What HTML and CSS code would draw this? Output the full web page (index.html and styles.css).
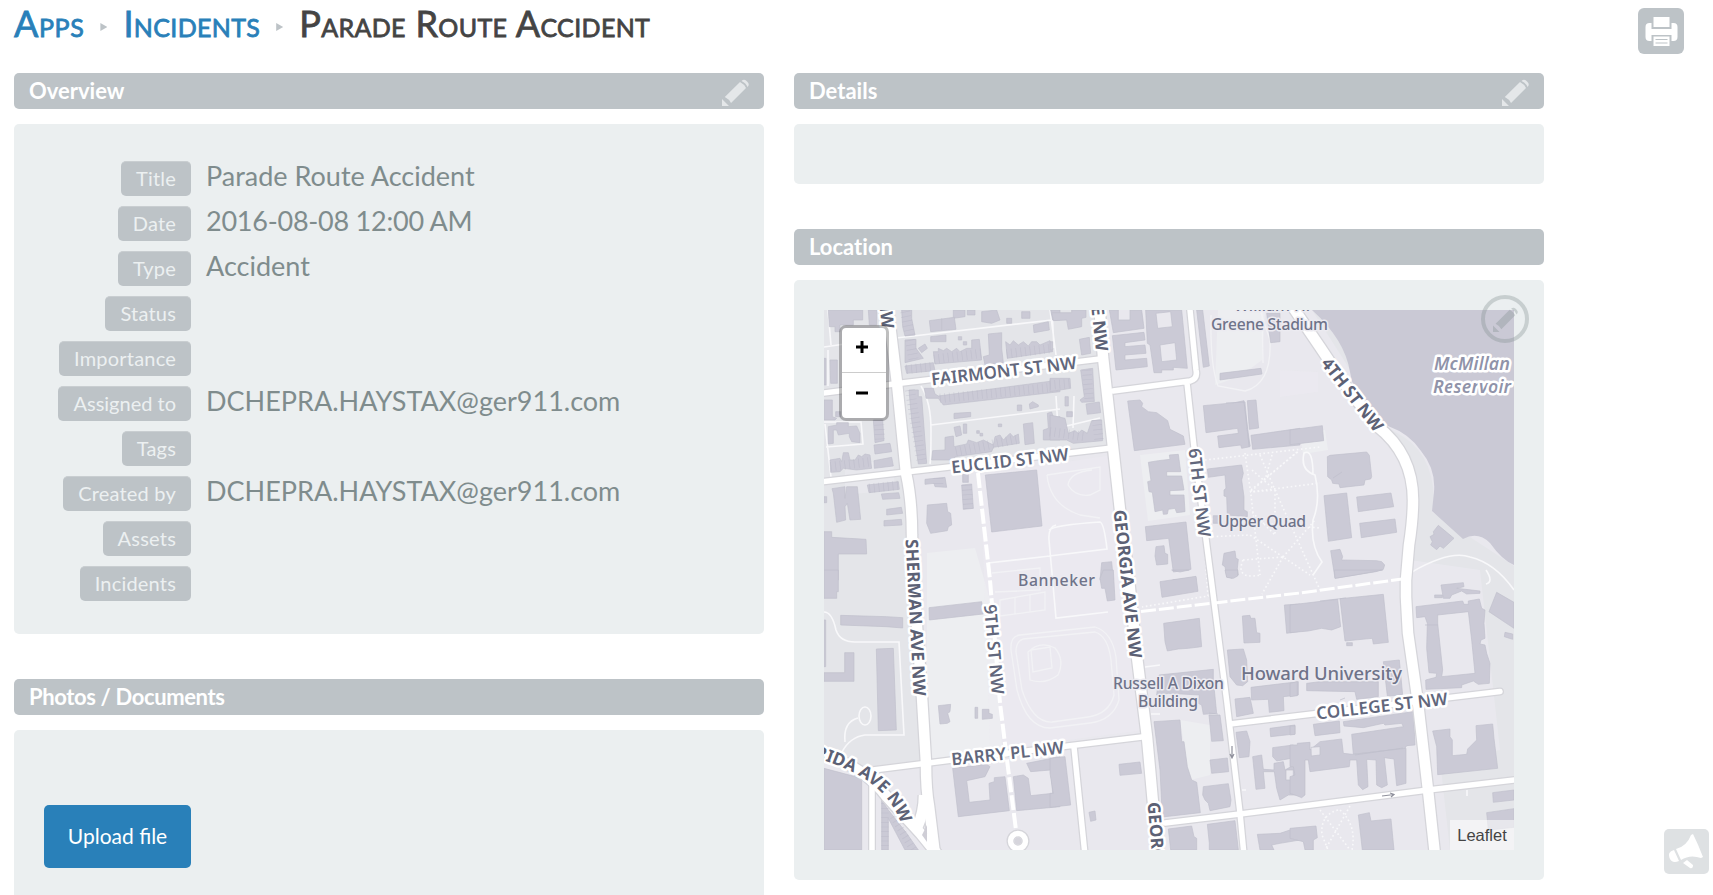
FILE: index.html
```html
<!DOCTYPE html>
<html lang="en">
<head>
<meta charset="utf-8">
<title>Parade Route Accident</title>
<link rel="stylesheet" href="styles.css">
</head>
<body>
<svg class="defs" width="0" height="0">
  <symbol id="pencil" viewBox="0 0 27 27"><path d="M0 27V20l7 7zM2.800 18 18 3q4 2 6 6L9 24Q7 20 2.800 18zM19.500 2q2.500-2.500 5 0l1 1q2.500 2.500 0 5Q24 4 19.500 2z"/></symbol>
</svg>
<header class="topbar">
  <nav class="crumbs"><a class="c-apps">Apps</a><i class="arrow"></i><a class="c-inc">Incidents</a><i class="arrow"></i><span class="c-title">Parade Route Accident</span></nav>
  <button class="print" aria-label="Print"><svg viewBox="0 0 46 46"><path fill="#fff" d="M15.500 9h16v10h-16zM7.500 19q0-4 4-4h2v6h20v-6h2q4 0 4 4v10q0 4-4 4h-2v-6h-20v6h-2q-4 0-4-4zM15.500 28.500h16V38h-16z"/><path stroke="#bdc3c7" d="M17.500 31.500h12M17.500 35h12"/></svg></button>
</header>
<main class="columns">
  <section class="column">
    <h2 class="bar">Overview<svg class="edit"><use href="#pencil"/></svg></h2>
    <div class="panel overview">
      <div class="row"><span class="tag">Title</span><span class="val">Parade Route Accident</span></div>
      <div class="row"><span class="tag">Date</span><span class="val date">2016-08-08 12:00 AM</span></div>
      <div class="row"><span class="tag">Type</span><span class="val">Accident</span></div>
      <div class="row"><span class="tag">Status</span></div>
      <div class="row"><span class="tag">Importance</span></div>
      <div class="row"><span class="tag tight">Assigned to</span><span class="val">DCHEPRA.HAYSTAX@ger911.com</span></div>
      <div class="row"><span class="tag">Tags</span></div>
      <div class="row"><span class="tag">Created by</span><span class="val">DCHEPRA.HAYSTAX@ger911.com</span></div>
      <div class="row"><span class="tag">Assets</span></div>
      <div class="row"><span class="tag">Incidents</span></div>
    </div>
    <h2 class="bar docs">Photos / Documents</h2>
    <div class="panel photos"><button class="upload">Upload file</button></div>
  </section>
  <section class="column">
    <h2 class="bar">Details<svg class="edit"><use href="#pencil"/></svg></h2>
    <div class="panel details"></div>
    <h2 class="bar">Location</h2>
    <div class="panel location">
      <div class="map">
<svg class="tiles" viewBox="824 310 690 540">
  <defs>
    <path id="florida" d="M764 745Q822 756 856 774T901 824"/>
    <g id="roads">
      <path class="w11" d="M887 300L897 383L906 473Q912 500 912 535L913 570L922 697L926 763Q926 790 929 806L935 855"/>
      <path class="w11" d="M1099 300L1103 357L1113 447L1120 510L1128 570L1137 657L1147 737L1153 803L1158 855"/>
      <path class="w11" d="M1288 300L1320 347L1350 392L1377 426Q1413 454 1413 500Q1413 520 1409 545L1406 580V597L1408 633L1418 703L1428 790L1435 855"/>
      <path class="w11" d="M820 754Q863 765 887 797L920 833L938 855M924 795Q924 812 917 828"/>
      <path class="w6" d="M1189 300L1196 370Q1198 379 1190 381L1113 391M1187 383L1194 447L1210 570L1227 703L1240 813L1244 855"/>
      <path class="w6" d="M820 393.500L902 383L1100 359M820 482L906 472L1112 448M873 770L952 760L1142 737M1074 747L1085 855M1165 823L1240 814L1428 790L1518 779.500"/>
      <path class="w6" d="M1230 724L1300 715.500L1500 691.500M872 773V855"/>
      <circle class="w6" cx="1018" cy="841" r="7.500"/>
    </g>
  </defs>
  <rect x="824" y="310" width="690" height="540" fill="#e9e8ee"/>
  <path class="block" d="M824 310H1100L1112 448L906 473L914 570L926 763L873 770L824 755zM1312 310Q1345 340 1350 370Q1358 410 1395 432Q1433 450 1434 500L1432 512L1514 566V850H1450L1440 760L1500 750L1480 570L1410 560L1413 500L1395 440z"/>
  <path class="pale" d="M927 553L975 548L990 600L997 670L1003 760L927 758zM1218 310H1265L1262 360Q1240 378 1215 385zM1300 435L1325 430L1328 450L1303 454zM1140 455L1185 450L1190 515L1148 521zM1180 720L1210 725L1210 775L1190 780z"/>
  <path class="lilac" d="M980 475L1112 455L1145 730L990 750L985 600zM1280 370L1318 372V392L1280 397zM845 465L893 460 895 490 845 495z" opacity=".45"/>
  <path class="water" d="M1312 310Q1345 340 1350 372Q1356 408 1388 426Q1410 434 1421 451Q1436 469 1434 492L1432 511L1463 539Q1478 531 1490 543Q1502 560 1514 565V310z"/>

  <!-- footpaths and alleys -->
  <g class="alley">
    <path d="M828 310L831 345M824 347L845 344M828 350V386M896 338L1052 320M1050 310L1056 355M921 386Q931 402 931 430T930 464M931 425L1060 409M824 422L861 422L863 444L826 447M825 424L831 477M1056 396L1058 428L1100 418M1074 396L1073 428M1052 310L1054 348"/>
    <path d="M824 612Q832 612 836 630Q840 642 855 642H899L904 735H865Q850 737 842 752M845 742Q843 722 858 718"/>
    <ellipse cx="865" cy="716" rx="6" ry="9"/>
    <path d="M1056 525Q1048 527 1049 540L1056 618L1108 612M1050 556L988 563M1049 530Q1055 525 1100 522Q1104 523 1107 549L1049 556"/>
    <path d="M1412 572Q1450 550 1470 557Q1495 563 1514 590M1486 570Q1494 582 1486 584M1313 575L1322 562Q1310 545 1313 520Q1321 500 1315 475Q1300 470 1304 453Q1313 448 1313 475"/>
    <path d="M1145 667L1160 665M1151 714H1160M1467 790V796M1242 790H1246"/>
  </g>
  <g class="faint">
    <path d="M1020 635L1095 627Q1112 632 1116 657L1119 700Q1113 720 1090 723L1050 728Q1027 728 1017 690L1011 650Q1010 636 1020 635zM1023 639L1095 632Q1108 636 1111 660L1114 695Q1109 714 1088 717L1052 722Q1033 723 1022 690L1016 652Q1016 641 1023 639z"/>
    <path d="M1031 650L1050 647L1052 668L1033 672zM1028 652Q1040 640 1055 648Q1065 660 1058 675Q1045 685 1030 680z"/>
    <path d="M1047 475L1100 467V490L1090 495Q1075 497 1068 485Q1070 472 1092 470M1047 475Q1050 505 1080 515L1100 518M1000 600L1045 592V610L1000 616zM1015 597V614M1030 595V612M992 573L1040 568V590L995 592"/>
    <path d="M1211 315Q1210 365 1218 386L1245 391Q1272 384 1270 340L1260 310M1262 310L1263 363"/>
  </g>
  <g class="dots">
    <path d="M1205 460L1320 447M1245 453L1251 495L1260 575M1251 490L1300 450M1260 455L1275 490L1320 590M1252 470L1275 490L1250 492L1320 483M1275 490V535L1250 510M1283 557L1315 520M1243 560L1283 557L1310 575M1243 560Q1235 580 1260 575M1283 557L1250 535L1205 537M1200 518L1320 528M1204 540L1208 596L1142 607M1283 557L1262 594M1272 455L1265 480M1297 452L1250 492"/>
    <path d="M1320 810L1350 850M1350 806L1325 850M1338 810Q1320 815 1322 835L1328 850M1340 810Q1357 825 1352 850"/>
  </g>

  <!-- buildings, one group per map tile -->
  <g class="bld" transform="translate(810 290) scale(.33333)">
    <path d="M55 60H158V90H130V105H90V125H75V110H58zM60 210H82V280H62zM42 205V285H48V205zM175 60H200V105H178zM275 60H305V85L315 135 285 138 278 110zM430 60H465V80L430 85zM472 60H495V75H472zM515 65L560 60 570 90 545 100 515 95zM590 85H605V100H590zM635 65H660V85H635zM670 105L715 95 718 120 672 128zM722 60H750V90H728z"/>
    <path d="M358 92L433 82 438 118 362 125zM395 85V120M362 140L408 135V155H362zM285 150L318 148V175L340 205 285 218zM325 175L345 162 352 175 335 188zM445 140H455V150H445zM460 155H470V165H460zM535 132L575 128V175L580 218 525 225 520 200 538 195zM285 228L370 218 375 242 290 250z"/>
    <path d="M370 185H385V175L400 182 410 175 425 185 440 175 450 185 470 175 485 175 485 150 508 148 515 210 375 222zM587 155L600 165 610 152 625 165 640 155 655 168 665 155 680 155 690 165 720 152 728 185 592 205z"/>
    <path d="M297 300H325V320H335L350 520 325 522 315 455 305 390zM343 295H370L375 312 385 318 750 270V305L400 345 385 325 348 325zM432 370L482 367V380L432 386zM622 345H635V362H622zM658 342L668 335 685 345 685 350 660 357zM432 412L450 408 455 435 438 440zM460 402H470V430H460zM500 422H508V430H500zM565 402H575V410H565zM510 430H518V438H510zM640 402L668 398 673 460 645 464zM712 370L725 366 730 382 750 380V450L700 450 700 420 715 415zM405 442L430 438 432 470 470 462 475 450 500 458 520 450 550 465 555 440 570 435 580 450 600 430 610 440 625 432 628 460 550 472 545 485 435 500 432 510 365 510 368 482 405 480z"/>
    <path d="M42 330H67V380L80 385 75 390H42zM77 365H92V380H77zM55 410L80 405 80 398 115 398V410L140 408 150 430V458L125 455 118 440 118 430 85 435 80 420 70 420V460L55 462zM60 510L90 505 95 515 100 488 115 488 120 510 135 510 145 495 155 500 165 492 180 495 185 535 140 540 100 535 90 545 62 547zM190 390H218L222 452 195 458zM192 465L240 460 245 485 195 492zM192 512L245 502 250 528 193 535zM172 585L265 575 268 598 177 608zM214 612L266 608 270 625 218 628zM230 658L274 652 278 670 230 675zM222 692L274 688 276 705 222 708z"/>
    <path d="M66 596L105 590 105 625 110 590 142 590 152 688 120 690 112 640 105 650 107 690 80 697 70 610zM42 620H50V638H42zM42 725H65V742L168 748 170 792H85V870H42zM345 568L405 562 410 592 375 590 372 580 345 583zM458 550H475V577H458zM455 585L485 582 490 655 460 658zM352 645L410 640 413 665 422 670 425 705 415 710 412 722 362 730 350 700z"/>
    <path d="M526 555L680 540 696 708 545 726z"/>
  </g>
  <g class="ticks" transform="translate(810 290) scale(.33333)">
    <path d="M372 208L515 190M590 192L725 175M390 325L750 290M438 485L620 448M290 238L370 230M178 595L265 586M62 530L182 515" stroke-width="28"/>
    <path d="M300 300L335 520M300 150L312 215M285 65L300 135M470 585L475 657M207 390L210 455M385 565V592" stroke-width="30"/>
  </g>
  <g class="bld" transform="translate(1050 290) scale(.33333)">
    <path d="M5 68H65V60H108V82L95 85V110L55 118 50 90 10 92zM0 155H8V180H0zM88 148L118 142 122 190 95 195zM178 60H205V90H240V60H275L282 115 190 128zM187 137L282 127 285 150 225 158V170L285 165 288 190 225 195V210L290 205 292 230 198 240zM287 60H395L412 235 370 232 370 240 335 240 335 248 312 248 300 165 292 160z"/>
    <path class="hole" d="M318 70L362 65 367 110 323 115zM330 165L375 158 380 210 335 215z"/>
    <path d="M440 60H458L478 228 460 232zM650 70H690V155L662 158zM510 250L633 235 636 252 510 270zM92 240L128 235 133 335 95 337 90 330 103 320zM0 265L60 265 62 295 0 305zM45 320H55V348H45zM108 342L148 336 152 368 112 373zM0 375L45 385 55 430 75 422 85 430 95 420 112 430 125 392 155 390 158 452 70 460 50 450 0 450zM50 365H67V380H50z"/>
    <path d="M233 333L270 330 278 340 275 350 295 365 320 368 353 392 360 418 400 438 405 463 253 482zM295 517L325 512 360 508 358 495 385 493 392 545 350 545V558L395 558 402 600 360 602V615L402 615 405 665 380 668 375 655 355 658 352 672 340 673 338 660 315 665 307 607 297 605 293 575 303 572zM286 710L408 696 423 838 370 846 356 745 290 752zM318 770L342 767 345 790 353 793 353 822 320 825 315 798zM155 818L185 815 190 870H150zM368 870L438 862V870z"/>
    <path d="M460 347L555 338 582 332 592 425 600 470 575 475 572 465 507 473 503 438 565 430 563 415 468 428zM592 332L618 330 626 414 598 418zM603 436L750 415V465L608 478zM472 537L575 525 580 550 575 570 582 620 582 660 592 665V680L532 675 530 620 522 618V600L528 595 525 555 475 562zM490 677H510V700H490zM522 790L555 783 558 805 565 808 562 835 565 855 545 865 530 860 525 830 517 825z"/>
  </g>
  <g class="ticks" transform="translate(1050 290) scale(.33333)">
    <path d="M0 285L60 280M0 425L110 440" stroke-width="28"/><path d="M110 240L118 335M140 390L147 450" stroke-width="28"/>
  </g>
  <g class="bld" transform="translate(1290 290) scale(.33333)">
    <path d="M0 420L97 407 101 452 0 464zM112 500L120 496 230 486 238 496 245 560 242 567 225 570 222 585 150 593 147 582 128 580 125 570 113 560zM102 617L170 609 185 743 115 754zM200 621L303 609 311 650 205 665zM209 700L315 687 320 727 214 743zM122 782L150 778 158 800 155 810 260 812 275 815 284 825 280 838 258 845 135 865z"/>
    <path d="M420 740L432 733 430 725 445 706 492 745 460 775 450 768 440 779 422 765 427 755z"/>
  </g>
  <g class="bld" transform="translate(810 570) scale(.33333)">
    <path d="M42 0H85V65H80V85H42zM92 136L230 140 278 143V174L228 170 92 165zM42 150H47V290H42zM104 248H132V334H42V308H104zM199 237L250 235 259 480 205 482zM357 113L515 95 520 132 358 150zM385 407L422 403 420 425 413 430 420 455 412 460 390 462zM495 412H503V445H495zM517 418H537V430L547 433V445L517 448zM42 595L155 625V840H42zM215 690L235 720 290 790 325 840H285L235 745V840H215z"/>
    <path d="M428 595L530 583 540 590 525 620 470 632 478 697 540 690 537 640 553 635V623L585 620 598 722 445 740zM610 620L640 615 655 625 662 677 728 670 722 600 662 605 650 580 750 560V710L620 722z"/>
  </g>
  <g class="ticks" transform="translate(810 570) scale(.33333)"><path d="M225 700V840M250 740L310 840" stroke-width="22"/></g>
  <g class="bld" transform="translate(1050 570) scale(.33333)">
    <path d="M150 25L160 0H190L195 90 172 93 165 55 155 55zM365 0H418L390 6zM525 0H563V18L550 25 530 22zM330 35L438 19 444 64 336 82zM341 160L448 145 455 230 415 235 385 237 352 243 345 215zM577 138L600 136 602 145 615 145 620 188 630 190V217L582 219zM703 105L750 102V184L710 190z"/>
    <path d="M327 315L490 298V330L500 430 460 433 455 405 445 400 448 375 355 370 320 375zM477 435L510 435 520 512 485 514zM532 240L580 237 590 270 593 335 578 347 560 345 540 320zM603 352L745 335V375L700 380 702 422 658 427 655 388 605 390zM555 387L600 382 610 430 560 440zM312 455L390 450 395 515 402 515 412 590 425 630 440 637 451 728 337 741 330 600zM480 570L532 564 536 605 485 610zM460 650L535 641 543 690 540 710 480 722 475 700 465 690 458 675zM558 487L590 483 600 515 597 560 568 563zM660 475L735 465V492L662 500zM668 533L730 525 733 545 750 540V560L680 573 668 560zM608 560L635 555 640 598 672 600V580L700 575 705 600 750 575V675L715 675 690 690 680 655 673 605H640L645 655 618 658z"/>
    <path class="hole" d="M708 600H730V630H708z"/>
    <path d="M207 583L270 576 275 610 210 616zM117 727L135 723 138 750 122 754zM0 565L45 560 62 705 0 712V670H10L0 610zM355 777L425 768 432 800 440 805V840H362zM472 763L555 752 565 840H478V820zM622 793L690 790 720 780 750 778V810L690 820 665 825 672 840H630z"/>
  </g>
  <g class="bld" transform="translate(1290 570) scale(.33333)">
    <path d="M133 0H278L195 15 135 25zM0 105L143 88 152 170 125 180 95 175 55 183 0 188zM150 86L280 73 295 217 250 222 247 205 165 213zM170 218H187V227H170zM453 45L520 38 522 50 500 55 570 63V70L530 72 515 63 485 75 480 85 460 85zM434 75H457V83H434zM378 110L518 93 522 103H535V93L568 87 575 115 585 120 582 160 585 205 573 210 570 222 585 225 590 250 600 280 598 340 565 343 550 333 515 345 515 353 408 358 407 330 438 322 440 310 417 308 410 235 412 160 405 140 380 143z"/>
    <path class="hole" d="M443 135L535 125 545 210 555 310 455 320 458 300 443 160z"/>
    <path d="M597 125L620 67 672 97V175zM645 187L668 192V208L643 200zM0 340L22 335V377L0 380zM50 340L90 335 265 335V380L200 388 195 365 50 362zM280 275L328 270 338 375 292 378zM0 468H15V493L0 495zM70 463L148 453 150 488 75 497zM160 455L370 425 375 525 350 527 345 535 190 553 185 493 340 470 335 460 285 465 280 460 220 473 162 468z"/>
    <path d="M187 553L348 535V640L320 647 312 567 283 563 292 645 275 653 260 645 258 570 230 568 234 650 218 659 205 645 200 570 180 570 178 590 60 605 55 570 45 570V675L35 683 15 675 0 670V620L15 615 10 590 0 590V525H22V520L60 517V540L90 515 155 507 160 550z"/>
    <path class="hole" d="M63 532L90 530 90 555 64 558z"/>
    <path d="M428 483L480 477V500L487 510 487 557 530 553 533 537 560 510 558 467 608 462 612 505 623 595 443 614 440 530zM205 735L238 728 243 753 303 747 312 840H217zM0 775L78 768 82 803 70 810V840H45L40 815 0 805zM608 668L672 660V690L610 697zM590 728L672 716V772L595 780z"/>
  </g>
  <path class="bldline" d="M1320 601L1346 598M1333 478L1342 472M1340 700L1345 698M1355 755L1403 748M1226 403L1245 402L1249 447M1244 402L1250 446M1425 625H1438M1209 713L1218 714" />

  <use href="#roads" class="casing"/>
  <use href="#roads" class="surface"/>
  <path fill="#cfced6" d="M922 835L927 825V842z"/>
  <circle cx="1018" cy="841" r="3.500" fill="#d6d5dc"/>
  <path class="dash9" d="M978 473L990 580L1000 703L1007 760L1016 830"/>
  <path class="dashp" d="M1141 611.500L1300 593L1402 579"/>
  <path class="oneway" d="M1232 746V757M1230 754L1232 758L1234 754M1382 796L1394 794.500M1390 793L1394 794.500L1391 797"/>

  <!-- street names -->
  <g class="st">
    <text textLength="146" transform="translate(932 385.500) rotate(-6.700)">FAIRMONT ST NW</text>
    <text textLength="118" transform="translate(952 473.500) rotate(-6.500)">EUCLID ST NW</text>
    <text textLength="113" transform="translate(952 765.500) rotate(-6.200)">BARRY PL NW</text>
    <text textLength="132" transform="translate(1317 719.500) rotate(-6.500)">COLLEGE ST NW</text>
    <text class="b" textLength="157" transform="translate(905.500 539.500) rotate(87)">SHERMAN AVE NW</text>
    <text class="b" textLength="149" transform="translate(1113.500 510.500) rotate(83.700)">GEORGIA AVE NW</text>
    <text class="b" textLength="149" transform="translate(1147.500 802.500) rotate(85)">GEORGIA AVE NW</text>
    <text class="b" text-anchor="end" transform="translate(882 329) rotate(84)">SHERMAN AVE NW</text>
    <text class="b" text-anchor="end" transform="translate(1096 351.500) rotate(84)">GEORGIA AVE NW</text>
    <text textLength="90" transform="translate(984 605) rotate(85)">9TH ST NW</text>
    <text textLength="89" transform="translate(1188.500 449) rotate(83.500)">6TH ST NW</text>
    <text class="b" textLength="88" transform="translate(1320.500 363.500) rotate(52)">4TH ST NW</text>
    <text class="b"><textPath href="#florida" startOffset="100%" text-anchor="end">FLORIDA AVE NW</textPath></text>
  </g>
  <!-- place names -->
  <g class="place">
    <text x="1234" y="311">William H.</text>
    <text x="1211" y="329.500" textLength="117">Greene Stadium</text>
    <text x="1218" y="527" textLength="88">Upper Quad</text>
    <text x="1018" y="585.500" textLength="77">Banneker</text>
    <text x="1113" y="689" textLength="111">Russell A Dixon</text>
    <text x="1138" y="706.500" textLength="60">Building</text>
    <text class="big" x="1241" y="680" textLength="161">Howard University</text>
  </g>
  <g class="lake"><text x="1434" y="370" textLength="76">McMillan</text><text x="1433" y="393" textLength="78">Reservoir</text></g>
</svg>
        <div class="zoom"><button aria-label="Zoom in"><svg viewBox="0 0 12 12"><path d="M0 6h12M6 0v12"/></svg></button><button aria-label="Zoom out"><svg viewBox="0 0 12 12"><path d="M0 6h12"/></svg></button></div>
        <div class="credit">Leaflet</div>
      </div>
      <button class="mapedit" aria-label="Edit location"><svg><use href="#pencil"/></svg></button>
    </div>
  </section>
</main>
<button class="announce" aria-label="Announcements"><svg viewBox="0 0 45 45"><path fill="#fff" d="M29 5Q34 15 39 28L37 29Q26 25 17 31L12 20Q23 17 27 6zM10 21L15 32Q8 35 5.500 29T10 21zM19 34L23 31L29 36Q29 40 26 39z"/></svg></button>
</body>
</html>
```

FILE: styles.css
```css
* { box-sizing: border-box; }
body { margin: 0; height: 895px; overflow: hidden; background: #fff; font-family: Lato, sans-serif; }
.defs { position: absolute; }
button { border: 0; padding: 0; font-family: inherit; }
.topbar { height: 73px; padding: 8px 29px 0 14px; display: flex; justify-content: space-between; align-items: flex-start; }
.crumbs { display: flex; align-items: center; height: 30px; font-size: 36px; line-height: 30px; font-weight: 400; font-variant: small-caps; letter-spacing: .35px; -webkit-text-stroke: .8px currentColor; color: #444; white-space: nowrap; }
.crumbs a { color: #2980b9; }
.c-apps { letter-spacing: .6px; }
.arrow { width: 7px; height: 8px; margin: 8px 16px 0 16px; background: #bdc3c7; clip-path: polygon(0 0, 100% 50%, 0 100%); }
.print { width: 46px; height: 46px; border-radius: 6px; background: #bdc3c7; }
.print svg, .announce svg { display: block; width: 100%; height: 100%; }
.columns { display: flex; gap: 30px; padding-left: 14px; }
.column { width: 750px; }
.bar { display: flex; justify-content: space-between; align-items: center; height: 36px; margin: 0 0 15px; padding: 0 15px; border-radius: 5px; background: #bdc3c7; color: #fff; font-size: 22px; font-weight: 700; line-height: 36px; font-variant-ligatures: none; }
.docs { letter-spacing: -.37px; }
.edit { width: 27px; height: 27px; margin-top: 3px; fill: #e4e7e9; }
.panel { border-radius: 5px; background: #ebeff0; }
.overview { height: 510px; padding: 37px 0 0; margin-bottom: 45px; }
.row { display: grid; grid-template-columns: 177px 1fr; gap: 15px; height: 45px; }
.tag { justify-self: end; height: 35px; padding: 0 15px; border-top: 1px solid #c9ced1; border-radius: 5px; background: #bdc3c7; color: #ecf0f1; font-size: 20px; letter-spacing: .2px; line-height: 33px; }
.tight { letter-spacing: 0; }
.val { color: #7f8c8d; font-size: 27px; line-height: 29px; white-space: nowrap; }
.date { letter-spacing: -.24px; }
.photos { height: 200px; padding: 75px 30px; }
.upload { width: 147px; height: 63px; padding-bottom: 2px; border-radius: 5px; background: #2980b9; color: #fff; font-size: 21px; }
.details { height: 60px; margin-bottom: 45px; }
.location { position: relative; height: 600px; padding: 30px; }
.map { position: relative; width: 690px; height: 540px; overflow: hidden; }
.tiles { display: block; width: 690px; height: 540px; }
.zoom { position: absolute; left: 15px; top: 15px; width: 50px; border: 3px solid rgba(0,0,0,.25); border-radius: 7px; background: #fff; background-clip: padding-box; }
.zoom button { display: flex; align-items: center; justify-content: center; width: 44px; height: 45px; padding-right: 5px; padding-bottom: 6px; background: none; }
.zoom button:first-child { border-bottom: 1px solid #ccc; }
.zoom svg { width: 12px; height: 12px; stroke: #000; stroke-width: 3; }
.credit { position: absolute; right: 0; bottom: 0; width: 64px; height: 30px; background: rgba(255,255,255,.55); color: #444; font: 16.5px/30px "Liberation Sans", sans-serif; text-align: center; }
.mapedit { position: absolute; right: 15px; top: 15px; width: 48px; height: 48px; border: 4px solid #7f8c8d; border-radius: 50%; background: none; opacity: .32; display: flex; align-items: center; justify-content: center; }
.mapedit svg { width: 25px; height: 25px; fill: #7f8c8d; }
.announce { position: absolute; left: 1664px; top: 829px; width: 45px; height: 45px; border-radius: 5px; background: #dee1e3; }

.block { fill: #e4e5e9; }
.pale { fill: #edeef1; }
.lilac { fill: #edecf2; }
.water { fill: #cac9d5; }
.bld path { fill: #cbcad6; stroke: #bfbfcc; stroke-width: 2; }
.bld .hole { fill: #e9e8ee; }
.bldline { fill: none; stroke: #bfbfcc; stroke-width: .7; }
.ticks { fill: none; stroke: #b9b8c8; stroke-dasharray: 2 12; opacity: .5; }
.alley, .faint, .dots, #roads { fill: none; }
.alley { stroke: #f8f8fa; stroke-width: 1.6; }
.faint { stroke: #f2f2f5; stroke-width: 1.3; }
.dots { stroke: #f8f8fa; stroke-width: 1.6; stroke-dasharray: 1.6 2.6; }
.casing { stroke: #d5d5da; --w: 2.5px; }
.surface { stroke: #fff; --w: 0px; }
.w11 { stroke-width: calc(10.5px + var(--w)); }
.w6 { stroke-width: calc(5.5px + var(--w)); stroke-linecap: round; }
.dash9 { fill: none; stroke: #fff; stroke-width: 4; stroke-dasharray: 15 3; }
.dashp { fill: none; stroke: #fff; stroke-width: 3; stroke-dasharray: 15 3; }
.oneway { fill: none; stroke: #8f909c; stroke-width: 1.2; }
.st text, .place text, .lake text { font-family: "Noto Sans", "Open Sans", sans-serif; paint-order: stroke; stroke: #fff; stroke-linejoin: round; }
.st text { font-size: 17.3px; font-weight: 600; fill: #62677c; stroke-width: 5px; }
.st .b { font-weight: 700; fill: #5c6175; }
.place text { font-size: 15.8px; font-weight: 500; fill: #6f7389; stroke: #ecebf1; stroke-width: 3px; }
.place .big { font-size: 18.5px; }
.lake text { font-size: 18px; font-weight: 600; font-style: italic; fill: #9093a9; stroke-width: 5px; }
```
